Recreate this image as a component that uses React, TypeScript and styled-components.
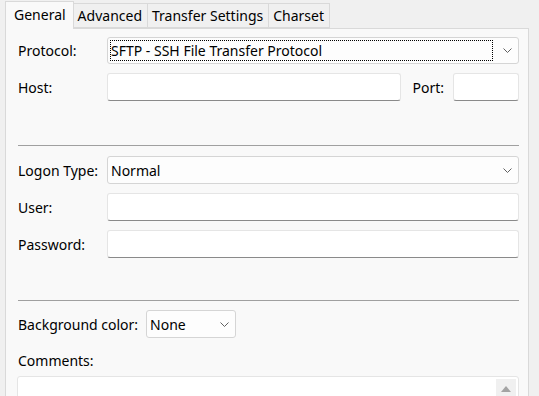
import styled, { createGlobalStyle } from "styled-components";

const GlobalStyle = createGlobalStyle`
  html, body {
    margin: 0;
    padding: 0;
    background: #f0f0f0;
    overflow: hidden;
  }
  body {
    font-family: "Noto Sans", "Segoe UI", sans-serif;
    font-size: 14px;
    color: #000;
  }
`;

const tabs = ["General", "Advanced", "Transfer Settings", "Charset"];

const Chevron = () => (
  <svg width="9" height="5" viewBox="0 0 9 5">
    <polyline points="0.5,0.5 4.5,4.5 8.5,0.5" fill="none" stroke="#606060" strokeWidth="1" />
  </svg>
);

const App: React.FC = () => {
  return (
    <>
      <GlobalStyle />
      <Window>
        <TabBar>
          {tabs.map((t, i) => (
            <Tab key={t} $active={i === 0}>
              {t}
            </Tab>
          ))}
        </TabBar>
        <Panel>
          <Row $height={27}>
            <Label>Protocol:</Label>
            <Combo $focused>
              <ComboText $focused>SFTP - SSH File Transfer Protocol</ComboText>
              <Chevron />
            </Combo>
          </Row>
          <Row $height={28} $top={9}>
            <Label>Host:</Label>
            <Input />
            <InlineLabel>Port:</InlineLabel>
            <Input $width={66} />
          </Row>

          <Separator $top={44} />

          <Row $height={28} $top={10}>
            <Label>Logon Type:</Label>
            <Combo>
              <ComboText>Normal</ComboText>
              <Chevron />
            </Combo>
          </Row>
          <Row $height={28} $top={9}>
            <Label>User:</Label>
            <Input />
          </Row>
          <Row $height={28} $top={9}>
            <Label>Password:</Label>
            <Input />
          </Row>

          <Separator $top={42} />

          <Row $height={28} $top={9}>
            <Label $auto>Background color:</Label>
            <Combo $width={90}>
              <ComboText>None</ComboText>
              <Chevron />
            </Combo>
          </Row>
          <Row $height={20} $top={12}>
            <Label $auto>Comments:</Label>
          </Row>
          <TextArea>
            <ScrollBar>
              <svg width="10" height="6" viewBox="0 0 10 6">
                <polygon points="5,0 10,6 0,6" fill="#a3a3a3" />
              </svg>
            </ScrollBar>
          </TextArea>
        </Panel>
      </Window>
    </>
  );
};

export default App;

const Window = styled.div`
  width: 539px;
  height: 396px;
  box-sizing: border-box;
  padding: 0 10px 0 5px;
`;

const TabBar = styled.div`
  display: flex;
  align-items: flex-end;
  height: 28px;
  position: relative;
  z-index: 1;
`;

const Tab = styled.div<{ $active?: boolean }>`
  box-sizing: border-box;
  height: ${(p) => (p.$active ? 28 : 25)}px;
  padding: 0 ${(p) => (p.$active ? 7 : 5)}px 0 ${(p) => (p.$active ? 8 : 4)}px;
  margin-bottom: ${(p) => (p.$active ? -1 : 0)}px;
  display: flex;
  align-items: center;
  padding-bottom: ${(p) => (p.$active ? 3 : 1)}px;
  border: 1px solid #d9d9d9;
  border-bottom: ${(p) => (p.$active ? "none" : "1px solid #d9d9d9")};
  margin-left: ${(p) => (p.$active ? 0 : -1)}px;
  background: ${(p) => (p.$active ? "#f9f9f9" : "#f0f0f0")};
  white-space: nowrap;
`;

const Panel = styled.div`
  border: 1px solid #d9d9d9;
  background: #f9f9f9;
  padding: 8px 9px 0 12px;
  height: 420px;
  box-sizing: border-box;
`;

const Row = styled.div<{ $height: number; $top?: number }>`
  display: flex;
  align-items: center;
  height: ${(p) => p.$height}px;
  margin-top: ${(p) => p.$top ?? 0}px;
`;

const Label = styled.div<{ $auto?: boolean }>`
  flex: none;
  width: ${(p) => (p.$auto ? "auto" : "89px")};
  margin-right: ${(p) => (p.$auto ? 8 : 0)}px;
  white-space: nowrap;
`;

const InlineLabel = styled.div`
  flex: none;
  margin: 0 9px 0 11px;
`;

const Combo = styled.div<{ $width?: number; $focused?: boolean }>`
  box-sizing: border-box;
  height: 100%;
  ${(p) => (p.$width ? `width: ${p.$width}px;` : "flex: 1;")}
  display: flex;
  align-items: center;
  justify-content: space-between;
  padding: 2px 6px 2px 2px;
  border: 1px solid #d5d5d5;
  border-radius: 3px;
  background: #fdfdfd;
`;

const ComboText = styled.div<{ $focused?: boolean }>`
  flex: 1;
  height: 100%;
  box-sizing: border-box;
  display: flex;
  align-items: center;
  padding-left: 1px;
  margin-right: ${(p) => (p.$focused ? 10 : 0)}px;
  outline: ${(p) => (p.$focused ? "1px dotted #000" : "none")};
  outline-offset: -1px;
`;

const Input = styled.div<{ $width?: number }>`
  box-sizing: border-box;
  height: 100%;
  ${(p) => (p.$width ? `width: ${p.$width}px; flex: none;` : "flex: 1;")}
  background: #fff;
  border: 1px solid #e5e5e5;
  border-bottom-color: #8a8a8a;
  border-radius: 3px;
`;

const Separator = styled.div<{ $top: number }>`
  height: 1px;
  background: #a0a0a0;
  margin-top: ${(p) => p.$top}px;
`;

const TextArea = styled.div`
  margin-top: 6px;
  margin-left: -1px;
  height: 90px;
  background: #fff;
  border: 1px solid #e5e5e5;
  border-radius: 3px;
  display: flex;
  justify-content: flex-end;
  padding: 2px;
`;

const ScrollBar = styled.div`
  width: 20px;
  background: #f0f0f0;
  display: flex;
  justify-content: center;
  padding-top: 7px;
  box-sizing: border-box;
`;
